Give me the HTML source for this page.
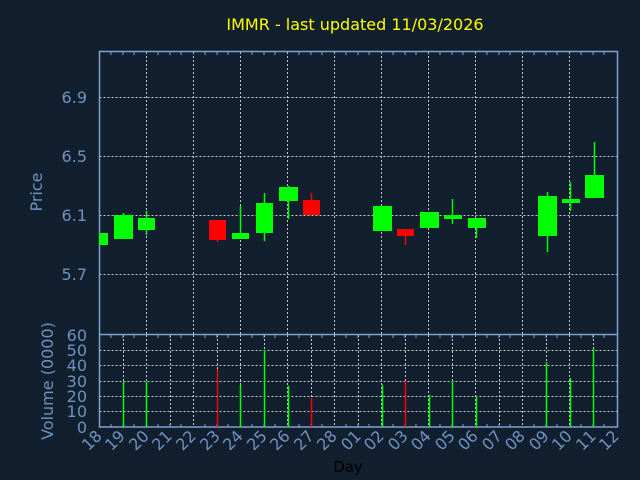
<!DOCTYPE html>
<html><head><meta charset="utf-8"><style>
html,body{margin:0;padding:0;background:#111f2f;width:640px;height:480px;overflow:hidden}
svg{display:block}
text{font-family:"DejaVu Sans","Liberation Sans",sans-serif}
</style></head><body>
<svg width="640" height="480" viewBox="0 0 640 480" xmlns="http://www.w3.org/2000/svg">
<rect width="640" height="480" fill="#111f2f"/>
<text x="355" y="30" fill="#ffff00" font-size="16" text-anchor="middle">IMMR - last updated 11/03/2026</text>
<g stroke="#c8c8c8" stroke-width="1" stroke-dasharray="2,2" fill="none">
<path d="M99.5 97.5H617M99.5 156.5H617M99.5 215.5H617M99.5 274.5H617"/>
<path d="M146.5 52V334M193.5 52V334M240.5 52V334M287.5 52V334M334.5 52V334M381.5 52V334M428.5 52V334M475.5 52V334M522.5 52V334M569.5 52V334"/>
<path d="M99.5 411.5H617M99.5 396.5H617M99.5 381.5H617M99.5 365.5H617M99.5 350.5H617"/>
<path d="M123.5 335V427M146.5 335V427M170.5 335V427M193.5 335V427M217.5 335V427M240.5 335V427M264.5 335V427M287.5 335V427M311.5 335V427M334.5 335V427M358.5 335V427M381.5 335V427M405.5 335V427M428.5 335V427M452.5 335V427M475.5 335V427M499.5 335V427M522.5 335V427M546.5 335V427M569.5 335V427M593.5 335V427"/>
</g>
<g stroke="#7fa3d0" stroke-width="1.5" fill="none">
<rect x="99.5" y="51.5" width="518" height="375.5"/>
<path d="M99.5 334.5H617.5"/>
</g>
<g stroke="#7fa3d0" stroke-width="1" fill="none">
<path d="M111 52v3M123 52v3M134 52v3M158 52v3M170 52v3M181 52v3M205 52v3M217 52v3M228 52v3M252 52v3M264 52v3M275 52v3M299 52v3M311 52v3M322 52v3M346 52v3M358 52v3M369 52v3M393 52v3M405 52v3M416 52v3M440 52v3M452 52v3M463 52v3M487 52v3M499 52v3M510 52v3M534 52v3M546 52v3M557 52v3M581 52v3M593 52v3M604 52v3"/>
<path d="M111 427v-3M123 427v-3M134 427v-3M158 427v-3M170 427v-3M181 427v-3M205 427v-3M217 427v-3M228 427v-3M252 427v-3M264 427v-3M275 427v-3M299 427v-3M311 427v-3M322 427v-3M346 427v-3M358 427v-3M369 427v-3M393 427v-3M405 427v-3M416 427v-3M440 427v-3M452 427v-3M463 427v-3M487 427v-3M499 427v-3M510 427v-3M534 427v-3M546 427v-3M557 427v-3M581 427v-3M593 427v-3M604 427v-3"/>
<path d="M111 335v3M123 335v3M134 335v3M158 335v3M170 335v3M181 335v3M205 335v3M217 335v3M228 335v3M252 335v3M264 335v3M275 335v3M299 335v3M311 335v3M322 335v3M346 335v3M358 335v3M369 335v3M393 335v3M405 335v3M416 335v3M440 335v3M452 335v3M463 335v3M487 335v3M499 335v3M510 335v3M534 335v3M546 335v3M557 335v3M581 335v3M593 335v3M604 335v3"/>
</g>
<g fill="#6f93c0" font-size="16" text-anchor="end">
<text x="87" y="103">6.9</text><text x="87" y="162">6.5</text><text x="87" y="221">6.1</text><text x="87" y="280">5.7</text>
<text x="87" y="341">60</text><text x="87" y="356">50</text><text x="87" y="371">40</text><text x="87" y="387">30</text><text x="87" y="402">20</text><text x="87" y="417">10</text><text x="87" y="433">0</text>
</g>
<text transform="translate(42,192) rotate(-90)" fill="#6f93c0" font-size="16" text-anchor="middle">Price</text>
<text transform="translate(53,381) rotate(-90)" fill="#6f93c0" font-size="16" text-anchor="middle">Volume (0000)</text>
<text x="348" y="472" fill="#000" font-size="15" text-anchor="middle">Day</text>
<g fill="#6f93c0" font-size="16" text-anchor="end">
<text transform="translate(103,437) rotate(-45)">18</text>
<text transform="translate(126,437) rotate(-45)">19</text>
<text transform="translate(150,437) rotate(-45)">20</text>
<text transform="translate(173,437) rotate(-45)">21</text>
<text transform="translate(197,437) rotate(-45)">22</text>
<text transform="translate(221,437) rotate(-45)">23</text>
<text transform="translate(244,437) rotate(-45)">24</text>
<text transform="translate(268,437) rotate(-45)">25</text>
<text transform="translate(291,437) rotate(-45)">26</text>
<text transform="translate(315,437) rotate(-45)">27</text>
<text transform="translate(338,437) rotate(-45)">28</text>
<text transform="translate(362,437) rotate(-45)">01</text>
<text transform="translate(385,437) rotate(-45)">02</text>
<text transform="translate(409,437) rotate(-45)">03</text>
<text transform="translate(432,437) rotate(-45)">04</text>
<text transform="translate(456,437) rotate(-45)">05</text>
<text transform="translate(479,437) rotate(-45)">06</text>
<text transform="translate(503,437) rotate(-45)">07</text>
<text transform="translate(526,437) rotate(-45)">08</text>
<text transform="translate(550,437) rotate(-45)">09</text>
<text transform="translate(573,437) rotate(-45)">10</text>
<text transform="translate(597,437) rotate(-45)">11</text>
<text transform="translate(620,437) rotate(-45)">12</text>
</g>
<g stroke-width="1.5">
<path stroke="#00ff00" d="M123.5 213V238M146.5 211V235M240.5 206V238M264.5 193V241M288.5 186V219M382.5 206V230M429.5 212V227M452.5 199V224M476.5 218V238M547.5 192V252M570.5 182V211M594.5 142V198"/>
<path stroke="#ff0000" d="M217.5 220V242M311.5 193V215M405.5 229V245"/>
</g>
<g fill="#00ff00">
<rect x="99" y="233" width="9" height="12"/>
<rect x="114" y="215" width="19" height="24"/>
<rect x="138" y="218" width="17" height="12"/>
<rect x="232" y="233" width="17" height="6"/>
<rect x="256" y="203" width="17" height="30"/>
<rect x="279" y="187" width="19" height="14"/>
<rect x="373" y="206" width="19" height="25"/>
<rect x="420" y="212" width="19" height="16"/>
<rect x="444" y="215" width="18" height="4"/>
<rect x="468" y="218" width="18" height="10"/>
<rect x="538" y="196" width="19" height="40"/>
<rect x="562" y="199" width="18" height="4"/>
<rect x="585" y="175" width="19" height="23"/>
</g>
<g fill="#ff0000">
<rect x="209" y="220" width="17" height="20"/>
<rect x="303" y="200" width="17" height="15"/>
<rect x="397" y="229" width="17" height="7"/>
</g>
<g stroke-width="1.5">
<path stroke="#00ff00" d="M123.5 427V382M146.5 427V382M240.5 427V385M264.5 427V350M288.5 427V386M382.5 427V385M429.5 427V395M452.5 427V381M476.5 427V396M546.5 427V362M570.5 427V378M593.5 427V349"/>
<path stroke="#ff0000" d="M217.5 427V369M311.5 427V398M405.5 427V381"/>
</g>
</svg>
</body></html>
